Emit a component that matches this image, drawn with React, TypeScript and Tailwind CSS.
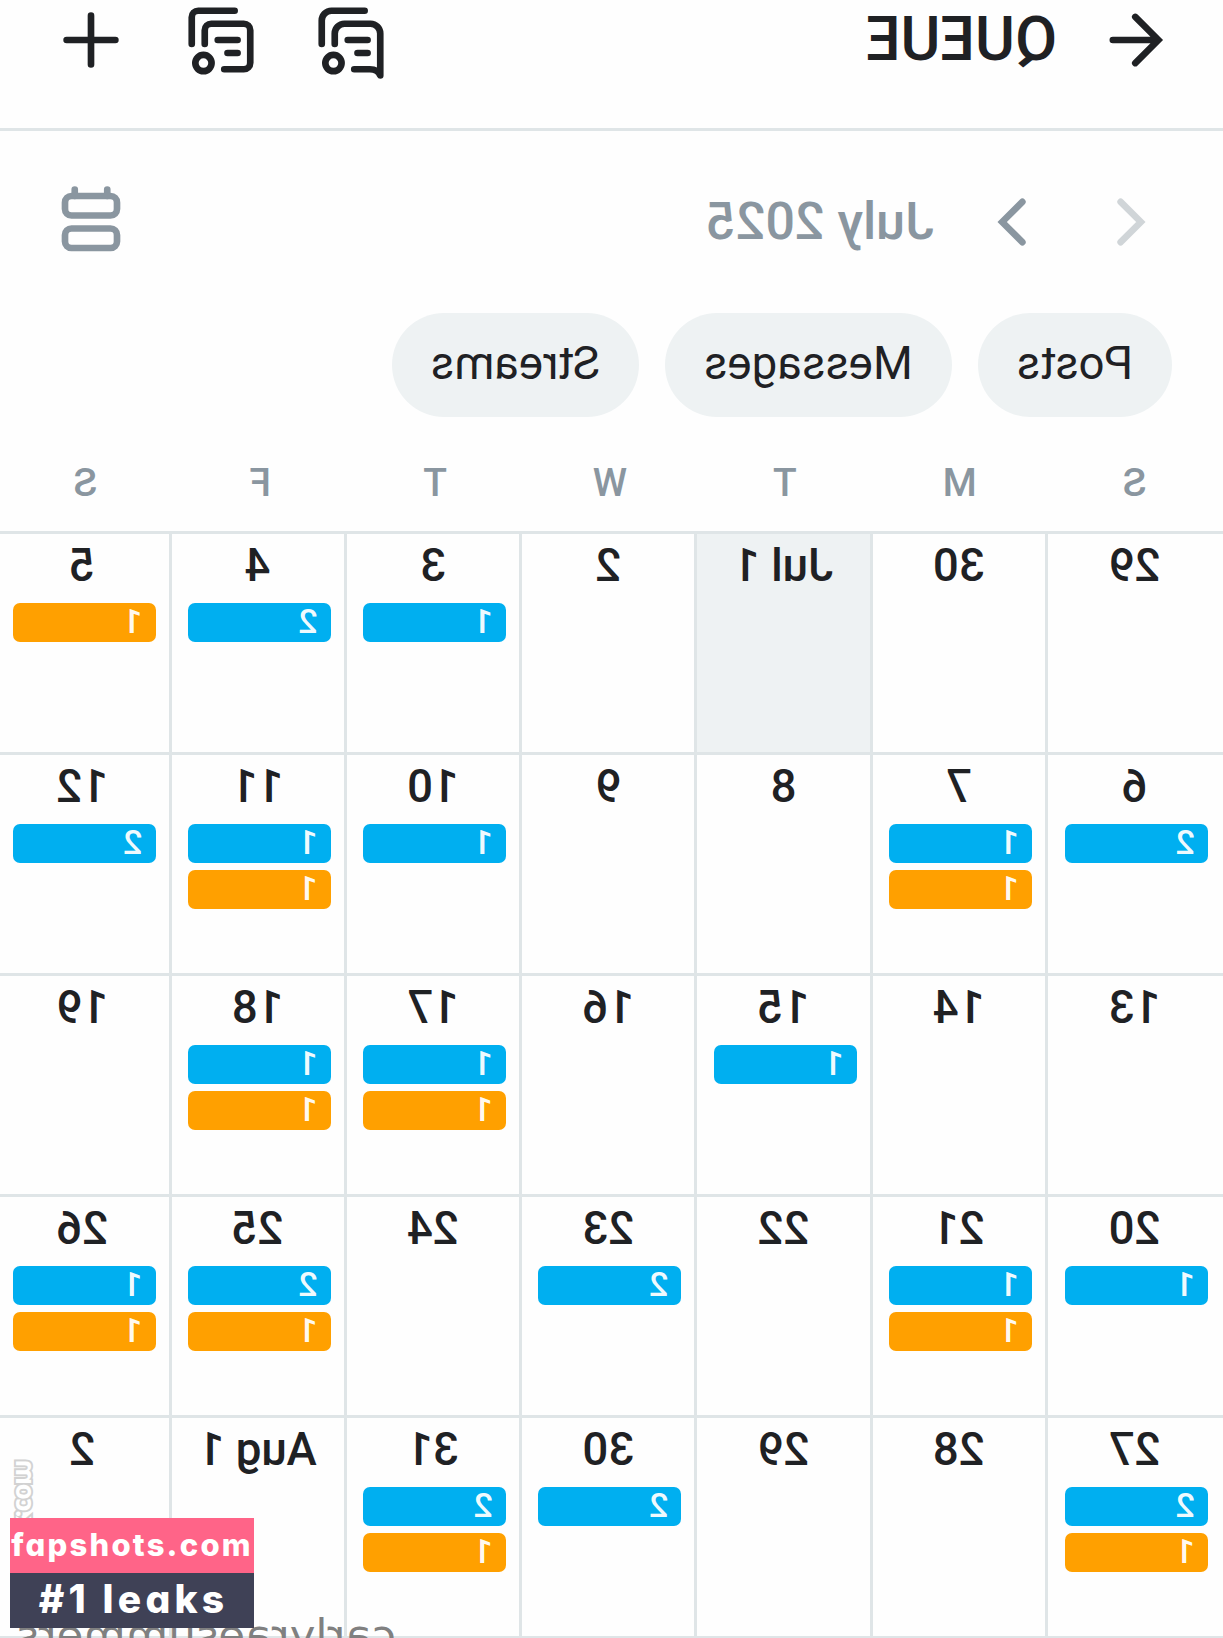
import React from 'react';

type Day = {
  label: string;
  posts?: number;
  messages?: number;
  today?: boolean;
};

const FILTERS = ['Posts', 'Messages', 'Streams'];

const WEEKDAYS = ['S', 'M', 'T', 'W', 'T', 'F', 'S'];

const DAYS: Day[] = [
  { label: '29' },
  { label: '30' },
  { label: 'Jul 1', today: true },
  { label: '2' },
  { label: '3', posts: 1 },
  { label: '4', posts: 2 },
  { label: '5', messages: 1 },
  { label: '6', posts: 2 },
  { label: '7', posts: 1, messages: 1 },
  { label: '8' },
  { label: '9' },
  { label: '10', posts: 1 },
  { label: '11', posts: 1, messages: 1 },
  { label: '12', posts: 2 },
  { label: '13' },
  { label: '14' },
  { label: '15', posts: 1 },
  { label: '16' },
  { label: '17', posts: 1, messages: 1 },
  { label: '18', posts: 1, messages: 1 },
  { label: '19' },
  { label: '20', posts: 1 },
  { label: '21', posts: 1, messages: 1 },
  { label: '22' },
  { label: '23', posts: 2 },
  { label: '24' },
  { label: '25', posts: 2, messages: 1 },
  { label: '26', posts: 1, messages: 1 },
  { label: '27', posts: 2, messages: 1 },
  { label: '28' },
  { label: '29' },
  { label: '30', posts: 2 },
  { label: '31', posts: 2, messages: 1 },
  { label: 'Aug 1' },
  { label: '2' },
];

const Icon: React.FC<{ className?: string; children: React.ReactNode }> = ({ className = '', children }) => (
  <svg
    className={`w-[78px] h-[78px] shrink-0 ${className}`}
    viewBox="0 0 24 24"
    fill="none"
    stroke="currentColor"
    strokeWidth="2.05"
    strokeLinecap="round"
  >
    {children}
  </svg>
);

const Header: React.FC = () => (
  <header className="h-[131px] border-b-3 border-[#dfe5e7] pl-[51px] pr-[52px] pt-px flex items-start text-[#1f2124]">
    <Icon>
      <path d="M11.3 4.9 4.2 12l7.1 7.1M5 12h13.2" />
    </Icon>
    <h1 className="ml-[37px] text-[61px] leading-[77px] font-medium">QUEUE</h1>
    <div className="ml-auto flex gap-[52px]">
      {/* Queued messages */}
      <Icon>
        <path d="M7.8 3H18a3 3 0 0 1 3 3v7.2" />
        <path d="M17 13.2V10a3 3 0 0 0-3-3H6a3 3 0 0 0-3 3v12.9C3.5 21.7 4.6 21 6.2 21h4.8" strokeLinejoin="round" />
        <path d="M6.9 12H13M6.9 16H10" />
        <circle cx="17.4" cy="19.1" r="2.5" />
      </Icon>
      {/* Queued posts */}
      <Icon>
        <path d="M7.8 3H19a2 2 0 0 1 2 2v8.2" />
        <path d="M17 13.2V9a2 2 0 0 0-2-2H5a2 2 0 0 0-2 2v10a2 2 0 0 0 2 2h6" />
        <path d="M6.9 12H13M6.9 16H10" />
        <circle cx="17.4" cy="19.1" r="2.5" />
      </Icon>
      <Icon>
        <path d="M12 4.5v15M4.5 12h15" />
      </Icon>
    </div>
  </header>
);

const MonthBar: React.FC = () => (
  <div className="mt-[52px] pl-[51px] pr-[52px] h-[78px] flex items-center text-[#8a96a0]">
    <Icon className="text-[#d0d5d8]">
      <path d="M15.8 5.8 9.6 12l6.2 6.2" />
    </Icon>
    <Icon className="ml-[45px]">
      <path d="M8.2 5.8 14.4 12l-6.2 6.2" />
    </Icon>
    <h2 className="ml-[37px] text-[52px] leading-[78px] font-medium">July 2025</h2>
    <Icon className="ml-auto">
      <path d="M7 2v2M17 2v2" />
      <rect x="4" y="4" width="16" height="6" rx="2" />
      <rect x="4" y="14" width="16" height="6" rx="2" />
    </Icon>
  </div>
);

const Bar: React.FC<{ count: number; color: string }> = ({ count, color }) => (
  <div className={`w-[143px] h-[39px] rounded-[7px] pl-[13px] text-[34px] leading-[36px] font-medium text-white/95 ${color}`}>
    {count}
  </div>
);

const DayCell: React.FC<{ day: Day }> = ({ day }) => (
  <div
    className={`h-[221px] border-t-3 border-r-3 border-[#dfe5e7] nth-[7n+1]:pl-[2px] ${day.today ? 'bg-[#eef2f3]' : ''}`}
  >
    <div className="h-[69px] pt-[4px] text-center text-[45.5px] leading-[56px] font-medium text-[#1f2124]">{day.label}</div>
    <div className="ml-[13px] flex flex-col gap-[7px]">
      {day.posts && <Bar count={day.posts} color="bg-[#00aff0]" />}
      {day.messages && <Bar count={day.messages} color="bg-[#ffa000]" />}
    </div>
  </div>
);

export default function App() {
  return (
    <div className="relative w-[1223px] h-[1638px] overflow-hidden bg-[#fefefe] font-['Roboto',sans-serif]">
      <div className="relative w-full h-full overflow-hidden -scale-x-100">
        <Header />
        <MonthBar />

        <div className="mt-[52px] px-[51px] flex gap-[26px]">
          {FILTERS.map((name) => (
            <button key={name} className="h-[104px] px-[39px] pb-[2px] rounded-full bg-[#eef2f3] text-[45.5px] text-[#1f2124]">
              {name}
            </button>
          ))}
        </div>

        <div className="mt-[38px] ml-[1px] w-[1224px] h-[76px] grid grid-cols-7 text-center text-[39px] leading-[56px] font-medium text-[#8a96a0]">
          {WEEKDAYS.map((name, i) => (
            <span key={i}>{name}</span>
          ))}
        </div>

        <div className="grid grid-cols-[178px_repeat(6,175.3px)]">
          {DAYS.map((day, i) => (
            <DayCell key={i} day={day} />
          ))}
        </div>
        <div className="h-[3px] bg-[#dfe5e7]" />

        <span className="absolute left-[827px] top-[1610px] text-[43.5px] leading-[51px] text-[#808080] font-['DejaVu_Sans',sans-serif]">
          carlyraesummers
        </span>

        {/* Side watermark, partly under the badge */}
        <span className="absolute right-[10px] top-[1461px] [writing-mode:vertical-rl] rotate-180 text-[26px] leading-[32px] tracking-[-1.5px] font-bold text-white [-webkit-text-stroke:4px_#d2d2d2] [paint-order:stroke_fill] font-['Open_Sans',sans-serif]">
          k.com
        </span>
      </div>

      <div className="absolute left-[10px] top-[1518px] w-[244px] text-center text-white font-extrabold whitespace-nowrap font-['Inter',sans-serif] [font-feature-settings:'cv11']">
        <div className="h-[55px] bg-[#ff6488] text-[31px] leading-[53px] tracking-[2.2px]">fapshots.com</div>
        <div className="h-[55px] bg-[#3f4156] pl-[3px] text-[39px] leading-[51px] tracking-[4.2px]">#1 leaks</div>
      </div>
    </div>
  );
}
